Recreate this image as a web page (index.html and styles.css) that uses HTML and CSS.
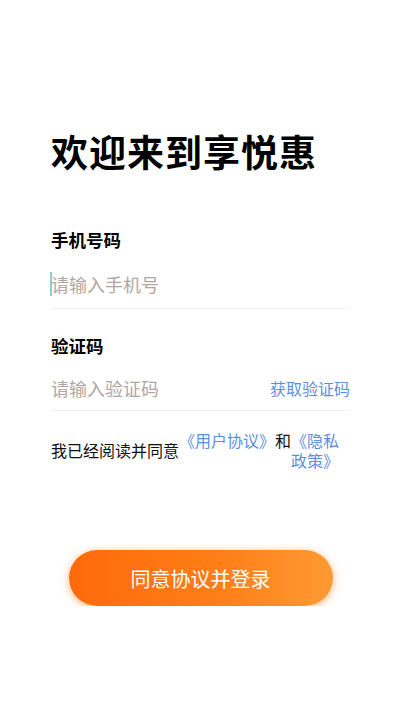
FILE: index.html
```html
<!DOCTYPE html>
<html lang="zh-CN">
<head>
<meta charset="utf-8">
<meta name="viewport" content="width=device-width, initial-scale=1">
<title>登录</title>
<link rel="stylesheet" href="styles.css">
</head>
<body>
<div class="page">
  <h1 class="title">欢迎来到享悦惠</h1>

  <div class="field field-phone">
    <div class="label">手机号码</div>
    <div class="input-row">
      <span class="caret"></span>
      <span class="placeholder">请输入手机号</span>
    </div>
  </div>

  <div class="field field-code">
    <div class="label">验证码</div>
    <div class="input-row">
      <span class="placeholder">请输入验证码</span>
      <span class="get-code">获取验证码</span>
    </div>
  </div>

  <div class="agree">
    <span class="agree-text">我已经阅读并同意</span>
    <div class="agree-links">
      <span class="link">《用户协议》</span>
      <span class="and">和</span>
      <span class="link link-wrap">《隐私政策》</span>
    </div>
  </div>

  <div class="btn-wrap">
    <div class="btn">同意协议并登录</div>
  </div>
</div>
</body>
</html>
```

FILE: styles.css
```css
* { box-sizing: border-box; }
html, body {
  margin: 0;
  padding: 0;
  background: #ffffff;
}
body {
  font-family: "Noto Sans CJK SC", "Noto Sans", sans-serif;
  color: #000;
}
.page {
  padding: 128px 50px 0 51px;
}
.title {
  margin: 0;
  font-size: 37px;
  line-height: 46px;
  font-weight: 700;
  letter-spacing: 1px;
}
.field-phone {
  margin-top: 54px;
}
.field-code {
  margin-top: 25px;
}
.label {
  font-size: 17.5px;
  line-height: 24px;
  font-weight: 700;
  margin-bottom: 7px;
}
.input-row {
  display: flex;
  align-items: center;
  border-bottom: 1px solid #f1f1f1;
  position: relative;
}
.field-phone .input-row {
  height: 50px;
}
.field-code .input-row {
  height: 46px;
}
.caret {
  position: absolute;
  left: -1px;
  top: 13px;
  width: 2px;
  height: 24px;
  background: #8fcfc9;
}
.placeholder {
  flex: 1;
  font-size: 18px;
  color: #b3a6a2;
}
.get-code {
  font-size: 16px;
  color: #5d8fdc;
}
.agree {
  display: flex;
  align-items: center;
  margin-top: 19px;
  font-size: 16px;
  line-height: 20px;
}
.agree-text {
  color: #111;
  white-space: nowrap;
}
.agree-links {
  display: flex;
  align-items: flex-start;
}
.link {
  color: #5d8fdc;
  white-space: nowrap;
}
.and {
  color: #111;
  white-space: nowrap;
}
.link-wrap {
  white-space: normal;
  width: 48px;
}
.btn-wrap {
  display: flex;
  justify-content: center;
  margin-top: 80px;
}
.btn {
  width: 264px;
  height: 56px;
  border-radius: 28px;
  background: linear-gradient(90deg, #ff6a0a 0%, #ff7d17 55%, #ff9a33 100%);
  box-shadow: 0 2px 8px rgba(255, 120, 20, 0.55);
  color: #fff;
  font-size: 20px;
  display: flex;
  align-items: center;
  justify-content: center;
}
```
